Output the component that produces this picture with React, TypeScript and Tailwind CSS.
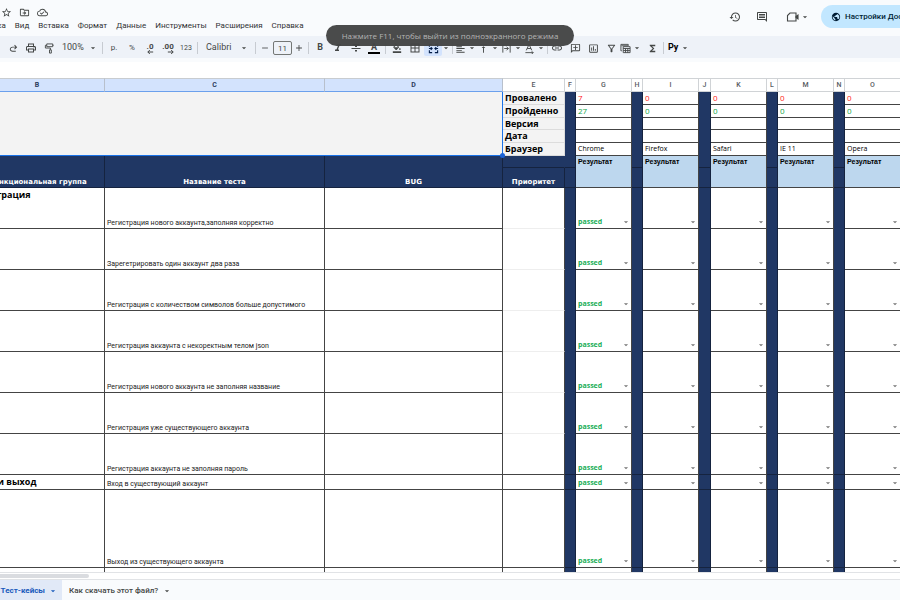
import React from 'react';
import {
  MdAdd,
  MdArrowDropDown,
  MdBorderAll,
  MdFormatAlignLeft,
  MdFormatColorFill,
  MdFormatItalic,
  MdFormatStrikethrough,
  MdFunctions,
  MdHistory,
  MdInsertChartOutlined,
  MdLink,
  MdOutlineAddComment,
  MdOutlineCloudDone,
  MdOutlineComment,
  MdOutlineDriveFileMove,
  MdOutlineFilterAlt,
  MdOutlinePrint,
  MdPublic,
  MdRemove,
  MdStarBorder,
  MdVerticalAlignTop,
} from 'react-icons/md';

const menus = ['Правка', 'Вид', 'Вставка', 'Формат', 'Данные', 'Инструменты', 'Расширения', 'Справка'];

const browsers = [
  { name: 'Chrome', col: 'G', gap: 'F', failed: 7, passed: 27 },
  { name: 'Firefox', col: 'I', gap: 'H', failed: 0, passed: 0 },
  { name: 'Safari', col: 'K', gap: 'J', failed: 0, passed: 0 },
  { name: 'IE 11', col: 'M', gap: 'L', failed: 0, passed: 0 },
  { name: 'Opera', col: 'O', gap: 'N', failed: 0, passed: 0 },
];

const cases = [
  { group: 'Регистрация', name: 'Регистрация нового аккаунта,заполняя корректно', height: 'h-[41px]' },
  { name: 'Зарегетрировать один аккаунт два раза', height: 'h-[41px]' },
  { name: 'Регистрация с количеством символов больше допустимого', height: 'h-[41px]' },
  { name: 'Регистрация аккаунта с некоректным телом json', height: 'h-[41px]' },
  { name: 'Регистрация нового аккаунта не заполняя название', height: 'h-[41px]' },
  { name: 'Регистрация уже существующего аккаунта', height: 'h-[41px]' },
  { name: 'Регистрация аккаунта не заполняя пароль', height: 'h-[41px]', line: true },
  { group: 'Вход \u00a0и выход', name: 'Вход в существующий аккаунт', height: 'h-[15px]', line: true },
  { name: 'Выход из существующего аккаунта', height: 'h-[78px]', line: true },
];

const summary = ['Провалено', 'Пройденно', 'Версия', 'Дата', 'Браузер'];

const Divider = () => <span className="mx-0.5 h-3 w-px shrink-0 bg-[#c7cbd1]" />;

const Tool: React.FC<{ label: string; children: React.ReactNode }> = ({ label, children }) => (
  <button aria-label={label} className="flex h-4 w-[18px] shrink-0 items-center justify-center">
    {children}
  </button>
);

const Combo: React.FC<{ label: string; children: React.ReactNode }> = ({ label, children }) => (
  <button aria-label={label} className="flex h-4 w-[23px] shrink-0 items-center gap-px">
    {children}
    <MdArrowDropDown className="size-2.5 shrink-0" />
  </button>
);

const RedoIcon = () => (
  <svg viewBox="0 0 24 24" className="size-[11px]" fill="currentColor">
    <path d="M9.900 19q-2.425 0-4.162-1.575Q4 15.850 4 13.500t1.738-3.925Q7.475 8 9.900 8h6.300l-2.600-2.600L15 4l5 5-5 5-1.400-1.400 2.600-2.600H9.900q-1.575 0-2.738 1Q6 12 6 13.500t1.162 2.500Q8.325 17 9.900 17H17v2z" />
  </svg>
);

const PaintIcon = () => (
  <svg viewBox="0 0 24 24" className="size-[11px]" fill="none" stroke="currentColor" strokeWidth="2">
    <path d="M6 2h13v6H6zM6 5H3v6h11v4M12 15h4v7h-4zM19 5h2" />
  </svg>
);

const MergeIcon = () => (
  <svg viewBox="0 0 24 24" className="size-[11px]" fill="none" stroke="currentColor" strokeWidth="2.4">
    <path d="M3 8V3h6M21 8V3h-6M3 16v5h6M21 16v5h-6M2 12h7M6 9l3 3-3 3M22 12h-7M18 9l-3 3 3 3" />
  </svg>
);

const WrapIcon = () => (
  <svg viewBox="0 0 24 24" className="size-[11px] shrink-0" fill="none" stroke="currentColor" strokeWidth="2">
    <path d="M4 3v18M20 3v18M7 12h9M12 8l4 4-4 4" />
  </svg>
);

const RotateIcon = () => (
  <svg viewBox="0 0 24 24" className="size-[11px] shrink-0" fill="none" stroke="currentColor" strokeWidth="2">
    <path d="M5 16l6-13 6 13M7 12h8M3 21h17M17 18l3 3-3 3" />
  </svg>
);

const TableViewIcon = () => (
  <svg viewBox="0 0 24 24" className="size-[11px] shrink-0" fill="none" stroke="currentColor" strokeWidth="2">
    <path d="M4 17H2V3h16v3M7 8h15v13H7zM7 12h15M7 16.500h15M12 12v9M17 12v9M3 6h15" />
  </svg>
);

const CameraIcon = () => (
  <svg viewBox="0 0 28 24" className="h-3 w-3.5" fill="none" stroke="currentColor" strokeWidth="2.2">
    <path d="M8 4h12v16H3V9z" />
    <path d="M20 11l4-3v8l-4-3z" fill="currentColor" />
  </svg>
);

const DecimalIcon: React.FC<{ digits: string; more?: boolean }> = ({ digits, more }) => (
  <span className="flex flex-col items-end text-[8px] leading-[7px] font-bold">
    {digits}
    <svg viewBox="0 0 10 6" className="h-1 w-[7px]" fill="none" stroke="currentColor" strokeWidth="1.5">
      <path d={more ? 'M1 3h8M6 0l3 3-3 3' : 'M9 3H1M4 0L1 3l3 3'} />
    </svg>
  </span>
);

const Header = () => (
  <header className="flex h-9 shrink-0 overflow-hidden">
    <div className="flex-1">
      <div className="flex h-5 items-center gap-[7px] pt-1 pl-px text-[#444746]">
        <button aria-label="Пометить"><MdStarBorder className="size-[11px]" /></button>
        <button aria-label="Переместить"><MdOutlineDriveFileMove className="size-[11px]" /></button>
        <button aria-label="Статус документа"><MdOutlineCloudDone className="size-[11px]" /></button>
      </div>
      <nav className="-ml-[22px] flex gap-[9px] text-[8px] leading-3 text-[#303234]">
        {menus.map((m) => (
          <button key={m}>{m}</button>
        ))}
      </nav>
    </div>
    <div className="flex h-[33px] w-[171px] shrink-0 items-center text-[#444746]">
      <button aria-label="История"><MdHistory className="size-3" /></button>
      <button aria-label="Комментарии" className="ml-[15px]"><MdOutlineComment className="size-3" /></button>
      <button aria-label="Видеовстреча" className="ml-[18px] flex items-center">
        <CameraIcon />
        <MdArrowDropDown className="size-2.5" />
      </button>
      <button className="ml-[11px] flex h-[23px] shrink-0 items-center gap-1 rounded-full bg-[#c2e7ff] px-2.5 text-[8px] font-medium whitespace-nowrap text-[#001d35]">
        <MdPublic className="size-2.5" />
        Настройки Доступа
      </button>
    </div>
  </header>
);

const Toolbar = () => (
  <div className="flex h-[22px] shrink-0 items-center overflow-hidden bg-[#eef2f8] pt-0.5 pl-1 text-[8px] text-[#444746]">
    <Tool label="Повторить"><RedoIcon /></Tool>
    <Tool label="Печать"><MdOutlinePrint className="size-3" /></Tool>
    <Tool label="Копировать форматирование"><PaintIcon /></Tool>
    <button className="flex w-[42px] shrink-0 items-center justify-between pr-0.5 pl-1 text-[9px]">
      100%
      <MdArrowDropDown className="size-2.5" />
    </button>
    <Divider />
    <Tool label="Рубли">р.</Tool>
    <Tool label="Проценты">%</Tool>
    <Tool label="Уменьшить число знаков"><DecimalIcon digits=".0" /></Tool>
    <Tool label="Увеличить число знаков"><DecimalIcon digits=".00" more /></Tool>
    <Tool label="Другие форматы"><span className="text-[7px]">123</span></Tool>
    <Divider />
    <button className="flex w-[53px] shrink-0 items-center justify-between px-1 pl-1.5 text-[9px]">
      Calibri
      <MdArrowDropDown className="size-2.5" />
    </button>
    <Divider />
    <button aria-label="Уменьшить размер" className="mr-0.5 flex w-[13px] shrink-0 justify-center"><MdRemove className="size-2.5" /></button>
    <input
      aria-label="Размер шрифта"
      defaultValue="11"
      className="h-3.5 w-[19px] shrink-0 rounded-xs border border-[#747775] text-center text-[8px]"
    />
    <button aria-label="Увеличить размер" className="flex w-[14px] shrink-0 justify-center"><MdAdd className="size-2.5" /></button>
    <Divider />
    <Tool label="Полужирный"><span className="text-[9px] font-bold">B</span></Tool>
    <Tool label="Курсив"><MdFormatItalic className="size-3" /></Tool>
    <Tool label="Зачеркнутый"><MdFormatStrikethrough className="size-3" /></Tool>
    <Tool label="Цвет текста">
      <span className="w-3 border-b-2 border-black text-[9px] leading-[9px] font-bold">A</span>
    </Tool>
    <Divider />
    <Tool label="Цвет заливки"><MdFormatColorFill className="size-2.5" /></Tool>
    <Tool label="Границы"><MdBorderAll className="size-3" /></Tool>
    <button aria-label="Объединить ячейки" className="flex h-4 w-[18px] shrink-0 items-center justify-center rounded-xs bg-[#d3e3fd] text-[#041e49]">
      <MergeIcon />
    </button>
    <button aria-label="Тип объединения" className="flex w-2 shrink-0 justify-center">
      <MdArrowDropDown className="size-2.5 shrink-0" />
    </button>
    <Divider />
    <Combo label="По горизонтали"><MdFormatAlignLeft className="size-[11px] shrink-0" /></Combo>
    <Combo label="По вертикали"><MdVerticalAlignTop className="size-[11px] shrink-0" /></Combo>
    <Combo label="Перенос текста"><WrapIcon /></Combo>
    <Combo label="Поворот текста"><RotateIcon /></Combo>
    <span className="h-3 w-px shrink-0 bg-[#c7cbd1]" />
    <Tool label="Ссылка"><MdLink className="size-3" /></Tool>
    <Tool label="Комментарий"><MdOutlineAddComment className="size-[11px] -scale-x-100" /></Tool>
    <Tool label="Диаграмма"><MdInsertChartOutlined className="size-[11px]" /></Tool>
    <Tool label="Фильтр"><MdOutlineFilterAlt className="size-[11px]" /></Tool>
    <Combo label="Фильтры"><TableViewIcon /></Combo>
    <Tool label="Функции"><MdFunctions className="size-[11px]" /></Tool>
    <Divider />
    <button className="ml-0.5 flex shrink-0 items-center gap-0.5 text-[9px] font-bold text-black">
      Ру
      <MdArrowDropDown className="size-2.5 text-[#444746]" />
    </button>
  </div>
);

const NavyCell: React.FC<{ className?: string }> = ({ className = '' }) => (
  <td className={`border-r border-[#15233f] bg-[#203764] ${className}`} />
);

const ResultCell: React.FC<{ label: string; value: string }> = ({ label, value }) => (
  <td className="border-r border-b border-[#444] p-0 align-bottom">
    <div className="flex h-3 items-center pl-0.5">
      <select
        aria-label={label}
        defaultValue={value}
        className="min-w-0 flex-1 appearance-none font-['Open_Sans',sans-serif] text-[7px] leading-[10px] font-bold text-[#21ae58]"
      >
        <option value="" />
        <option>passed</option>
        <option>failed</option>
      </select>
      <MdArrowDropDown className="size-2.5 shrink-0 text-[#777]" />
    </div>
  </td>
);

const Sheet = () => (
  <table className="-ml-[30px] w-[calc(100%+31px)] table-fixed border-separate border-spacing-0 text-[7px] leading-[10px] text-black">
    <colgroup>
      <col className="w-[135px]" />
      <col className="w-[220px]" />
      <col className="w-[178px]" />
      <col className="w-[62px]" />
      <col className="w-[11px]" />
      <col className="w-[56px]" />
      <col className="w-[11px]" />
      <col className="w-[56px]" />
      <col className="w-[12px]" />
      <col className="w-[56px]" />
      <col className="w-[11px]" />
      <col className="w-[56px]" />
      <col className="w-[11px]" />
      <col />
    </colgroup>
    <thead>
      <tr className="h-[14px] text-[#575b5f]">
        {['B', 'C', 'D'].map((c) => (
          <th key={c} className="border-t border-r border-b border-t-[#c8ccd0] border-r-[#b8c0cc] border-b-[#6ba0ec] bg-[#d3e3fd] p-0 font-bold text-[#2b3c5c]">
            {c}
          </th>
        ))}
        <th className="border-t border-r border-b border-[#d0d3d6] p-0 font-medium">E</th>
        {browsers.map((b) => (
          <React.Fragment key={b.col}>
            <th className="border-t border-r border-b border-[#d0d3d6] p-0 font-medium">{b.gap}</th>
            <th className="border-t border-r border-b border-[#d0d3d6] p-0 font-medium">{b.col}</th>
          </React.Fragment>
        ))}
      </tr>
    </thead>
    <tbody>
      {summary.map((title, i) => (
        <tr key={title} className={i === 2 ? 'h-3' : 'h-[13px]'}>
          {i === 0 && (
            <td colSpan={3} rowSpan={5} className="relative border-r border-b border-[#1a73e8] bg-[#f3f3f3]">
              <span className="absolute -right-[3px] -bottom-[3px] z-10 size-[5px] rounded-full bg-[#1a62d6]" />
            </td>
          )}
          <th className="border-r border-b border-[#dcdcdc] bg-[#f3f3f3] p-0 pl-0.5 text-left font-['Open_Sans',sans-serif] text-[9px]">
            {title}
          </th>
          {browsers.map((b) => (
            <React.Fragment key={b.col}>
              <NavyCell />
              <td className="border-r border-b border-[#444] p-0 pl-0.5 font-['Open_Sans',sans-serif]">
                {i === 0 && <span className="text-[8px] text-[#ff1a1a]">{b.failed}</span>}
                {i === 1 && <span className="text-[8px] text-[#10a64a]">{b.passed}</span>}
                {i === 4 && b.name}
              </td>
            </React.Fragment>
          ))}
        </tr>
      ))}
      <tr className="h-3 text-white">
        {['Функциональная группа', 'Название теста', 'BUG'].map((t) => (
          <th
            key={t}
            rowSpan={2}
            className="border-r border-b border-[#15233f] bg-[#203764] p-0 align-bottom font-['DejaVu_Sans',sans-serif]"
          >
            {t}
          </th>
        ))}
        <NavyCell className="border-b border-r-[#203764]" />
        {browsers.map((b) => (
          <React.Fragment key={b.col}>
            <NavyCell className="border-b" />
            <th rowSpan={2} className="border-r border-b border-[#444] bg-[#bdd7ee] p-0 pt-px pl-0.5 text-left align-top font-['Liberation_Sans',sans-serif] text-black">
              Результат
            </th>
          </React.Fragment>
        ))}
      </tr>
      <tr className="h-5 text-white">
        <th className="border-r border-b border-[#15233f] bg-[#203764] p-0 align-bottom font-['DejaVu_Sans',sans-serif]">Приоритет</th>
        {browsers.map((b) => (
          <NavyCell key={b.col} className="border-b" />
        ))}
      </tr>
      {cases.map((c) => (
        <tr key={c.name} className={c.height}>
          <td className="border-r border-b border-[#444] p-0 pt-0.5 align-top font-['Open_Sans',sans-serif] text-[9px] font-bold">
            {c.group}
          </td>
          <td className="border-r border-b border-[#444] p-0 pl-0.5 align-bottom whitespace-nowrap text-[#222]">{c.name}</td>
          <td className="border-r border-b border-[#444]" />
          <td className={c.line ? 'border-r border-b border-[#444]' : 'border-r border-b border-r-[#444] border-b-[#eee]'} />
          {browsers.map((b, i) => (
            <React.Fragment key={b.col}>
              <NavyCell className={c.line ? 'border-b' : ''} />
              <ResultCell label={`${b.name}: ${c.name}`} value={i === 0 ? 'passed' : ''} />
            </React.Fragment>
          ))}
        </tr>
      ))}
      <tr className="h-10">
        <td className="border-r border-[#444]" />
        <td className="border-r border-[#444]" />
        <td className="border-r border-[#444]" />
        <td className="border-r border-[#444]" />
        {browsers.map((b) => (
          <React.Fragment key={b.col}>
            <NavyCell />
            <td className="border-r border-[#444]" />
          </React.Fragment>
        ))}
      </tr>
    </tbody>
  </table>
);

const SheetTabs = () => (
  <footer className="flex h-[21px] shrink-0 border-t border-[#e1e3e6] text-[8px] font-medium whitespace-nowrap">
    <button className="flex w-[62px] shrink-0 items-center justify-end gap-[3px] bg-[#e1e9f7] pt-0.5 pr-1 font-bold text-[#185abc]">
      Тест-кейсы
      <MdArrowDropDown className="size-2.5 shrink-0" />
    </button>
    <button className="flex items-center gap-1 pt-0.5 pl-[7px] text-[#444746]">
      Как скачать этот файл?
      <MdArrowDropDown className="size-2.5" />
    </button>
  </footer>
);

export default function App() {
  return (
    <div className="relative flex h-screen flex-col overflow-hidden bg-[#f9fbfd] font-[Roboto,sans-serif]">
      <Header />
      <Toolbar />
      <div className="mt-1 h-4 shrink-0 bg-white" />
      <main className="min-h-0 flex-1 overflow-hidden bg-white">
        <Sheet />
      </main>
      <div className="h-[7px] shrink-0 border-t border-[#e1e3e6] bg-white">
        <div className="mt-px h-1 w-[89px] rounded-r-full bg-[#dadce0]" />
      </div>
      <SheetTabs />
      <div
        role="status"
        className="absolute top-[25px] left-1/2 flex h-[21px] w-[248px] -translate-x-1/2 items-center justify-center rounded-full bg-[#444545]/97 font-['Open_Sans',sans-serif] text-[8px] whitespace-nowrap text-[#b4b4b4]"
      >
        Нажмите F11, чтобы выйти из полноэкранного режима
      </div>
    </div>
  );
}
